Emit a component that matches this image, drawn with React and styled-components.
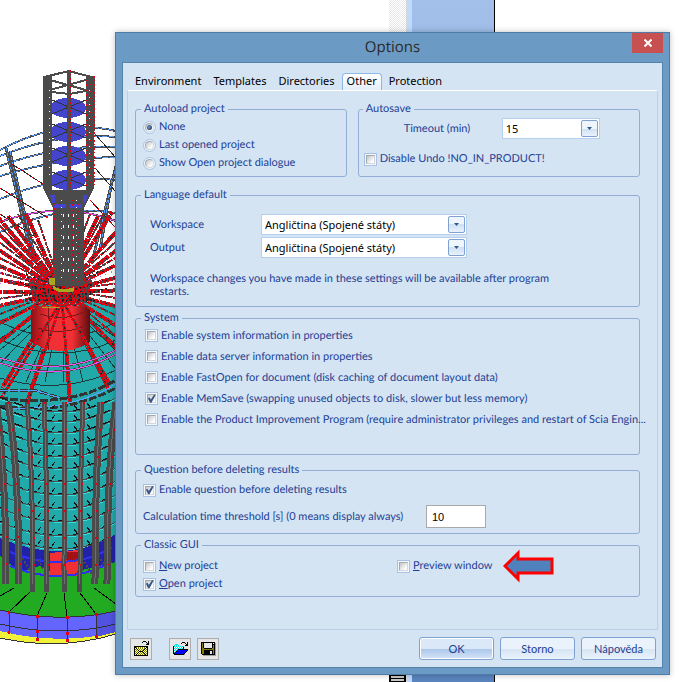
import React, { useState } from 'react';
import styled, { createGlobalStyle } from 'styled-components';

const GlobalStyle = createGlobalStyle`
    * {
        box-sizing: border-box;
    }
    body {
        margin: 0;
        background: #fff;
    }
    button, input, select {
        font: inherit;
        color: inherit;
        margin: 0;
    }
`

const Desktop = styled.div`
    position: relative;
    min-height: 100vh;
    padding: 32px 10px 7px 115px;
    overflow: hidden;
    font-family: Lato, 'Liberation Sans', Arial, sans-serif;
    font-size: 11px;
    line-height: 14px;
    text-rendering: geometricPrecision;
    color: #1c3f94;
`

const Backdrop = styled.div`
    position: absolute;
    inset: 0;
    .tower {
        display: block;
        position: absolute;
        top: 0;
        left: 0;
    }
`

const Strip = styled.div`
    position: absolute;
    top: 0;
    bottom: 0;
    left: 389px;
    width: 106px;
    display: flex;
    border-right: 1px solid #000;
    background: linear-gradient(#a2c0ea, #5a84bd);
    .track {
        width: 18px;
        border-right: 1px solid #d8d8d8;
        background: repeating-conic-gradient(#fff 0 25%, #e8e8e8 0 50%) 0 0 / 2px 2px;
        display: flex;
        align-items: flex-end;
    }
    .thumb {
        width: 17px;
        height: 10px;
        border: solid #000;
        border-width: 0 2px;
        background: repeating-linear-gradient(#000 0 1px, #c8c8c8 1px 3px);
    }
    .edge {
        width: 5px;
        background: #bfdaff;
    }
`

const Dialog = styled.section`
    position: relative;
    display: flex;
    flex-direction: column;
    border: 1px solid #4f7ca6;
    background: #6b9ac4;
    box-shadow: 0 0 6px rgba(0, 0, 0, 0.25);
`

const TitleBar = styled.header`
    height: 29px;
    display: grid;
    grid-template-columns: 1fr auto 1fr;
    h1 {
        margin: 0;
        font: 15px/29px 'Open Sans', sans-serif;
        color: #2b2b2b;
    }
`

const CloseButton = styled.button`
    justify-self: end;
    width: 31px;
    height: 20px;
    margin-right: 6px;
    padding: 0;
    border: 0;
    background: #c75050;
    display: flex;
    align-items: center;
    justify-content: center;
`

const Body = styled.div`
    margin: 0 6px 6px;
    padding: 10px 4px 7px;
    border: 1px solid #5382ab;
    background: #d5e4f3;
`

const Tabs = styled.nav`
    display: flex;
    padding-left: 3px;
`

const Tab = styled.button`
    height: 17px;
    padding: 0 4px 3px;
    margin-right: 2px;
    border: 1px solid ${props => props.$on ? '#8db8e8' : 'transparent'};
    border-bottom: 0;
    border-radius: 4px 4px 0 0;
    background: ${props => props.$on ? 'linear-gradient(#fff, #e3eefa)' : 'none'};
    font: 11px/13px 'Noto Sans', sans-serif;
    color: #000;
`

const Pane = styled.div`
    display: flex;
    flex-direction: column;
    padding: 11px 17px 32px 7px;
    border: 1px solid #b8d0ea;
    border-top-color: #fff;
`

const Columns = styled.div`
    display: grid;
    grid-template-columns: 3fr 4fr;
    gap: 11px;
`

const Group = styled.fieldset`
    min-width: 0;
    margin: 0 0 ${props => props.$gap || 0}px;
    padding: ${props => props.$pad};
    border: 1px solid #92aed6;
    border-radius: 3px;
`

const Legend = styled.legend`
    margin-left: -${props => props.$inset || 2}px;
    padding: 0 3px;
`

const Option = styled.label`
    position: relative;
    display: flex;
    align-items: center;
    gap: 3px;
    height: ${props => props.$tall ? 21 : 18}px;
    width: ${props => props.$fit ? 'fit-content' : 'auto'};
    span {
        white-space: nowrap;
    }
`

const Check = styled.input`
    appearance: none;
    flex: none;
    position: relative;
    width: 13px;
    height: 13px;
    border: 1px solid #a9c1e4;
    background: linear-gradient(135deg, #bfc3c8, #fff 80%) content-box, #f4f8fd;
    padding: 2px;
    &::before {
        content: '';
        position: absolute;
        inset: 1px;
        border: 1px solid #a5a9b0;
        border-right-color: #d3d6da;
        border-bottom-color: #d3d6da;
    }
    &:checked::after {
        content: '';
        position: absolute;
        inset: 1px;
        background: #35588a;
        clip-path: polygon(10% 45%, 30% 40%, 42% 62%, 78% 8%, 98% 8%, 50% 98%, 34% 98%);
    }
`

const Radio = styled(Check)`
    border-radius: 50%;
    background: #eef3f9;
    &::before {
        border-radius: 50%;
        background: linear-gradient(135deg, #c4c6ca, #fff 80%);
    }
    &:checked::after {
        inset: 3px;
        border-radius: 50%;
        clip-path: none;
        background: radial-gradient(circle at 40% 40%, #6f93bd, #2a4d7c 70%);
    }
`

const Field = styled.div`
    display: grid;
    grid-template-columns: ${props => props.$cols};
    align-items: center;
    margin: ${props => props.$top || 0}px 0 ${props => props.$gap || 0}px;
    padding-left: ${props => props.$indent || 0}px;
    label {
        white-space: nowrap;
    }
`

const SelectBox = styled.div`
    position: relative;
    width: ${props => props.$w}px;
    height: 21px;
    select {
        appearance: none;
        width: 100%;
        height: 100%;
        padding: 0 22px 0 3px;
        border: 1px solid #b5cfee;
        border-radius: 0;
        background: #fff;
        font: 11px/19px 'Noto Sans', sans-serif;
        color: #000;
    }
    i {
        position: absolute;
        top: 2px;
        right: 2px;
        width: 17px;
        height: 17px;
        border: 1px solid #7fa2d0;
        border-radius: 2px;
        background: linear-gradient(#eef5fd 50%, #cfe0f3 50%, #e8f2fd);
        pointer-events: none;
        display: flex;
        align-items: center;
        justify-content: center;
    }
`

const Note = styled.p`
    max-width: 410px;
    margin: 14px 0 0;
    line-height: 13px;
`

const NumberInput = styled.input`
    width: 60px;
    height: 23px;
    padding: 0 5px;
    border: 1px solid #a9a9a9;
    background: #fff;
    && {
        font: 11px/20px 'Liberation Sans', Arial, sans-serif;
        color: #000;
    }
`

const GuiGrid = styled.div`
    display: grid;
    grid-template-columns: 254px 1fr;
    .arrow {
        position: absolute;
        top: -8px;
        left: 100%;
        margin-left: 11px;
    }
`

const Footer = styled.footer`
    display: flex;
    align-items: center;
    gap: 6px;
    padding: 7px 2px 0 3px;
`

const IconButton = styled.button`
    width: 22px;
    height: 22px;
    margin-right: ${props => props.$gap || 0}px;
    padding: 0;
    border: 1px solid #adadad;
    background: #e6e6e6;
    display: flex;
    align-items: center;
    justify-content: center;
`

const PushButton = styled.button`
    width: 75px;
    height: 23px;
    padding: 0;
    border: 1px solid #7fa2d0;
    border-radius: 3px;
    background: ${props => props.$main
        ? 'linear-gradient(#dbe8f8 50%, #a9c5e8 50%, #d5e5f8)'
        : 'linear-gradient(#eaf2fc 50%, #d5e3f3 50%, #eaf3fd)'};
    box-shadow: ${props => props.$main ? 'inset 0 0 0 1px #fff' : 'none'};
    &.first {
        margin-left: auto;
    }
`

// one character per pixel
const palette = {
    k: '#000', w: '#fff', o: '#808000', y: '#ffff9c', c: '#00e5e5', b: '#0000ff', g: '#a0a0a0', l: '#e6e6e6',
};

const mailIcon = [
    '.........kkk..k',
    '........k...k.k',
    '.............kk',
    '............kkk',
    '...............',
    'kkkkkkkkkkkkkk.',
    'kkoyoyoyoyoykk.',
    'kykyoyoyoyokyk.',
    'koykyoyoyokyok.',
    'kyoykyoyokyoyk.',
    'koyoykkkkyoyok.',
    'kyoykyoyokyoyk.',
    'koykyoyoyokyok.',
    'kykyoyoyoyokyk.',
    'kkkkkkkkkkkkkk.',
];
const openIcon = [
    '.........kkk..k',
    '........k...k.k',
    '..ccc........kk',
    '.cwcwc......kkk',
    'kcwcwcwcwcc....',
    'kwcwcwcwcwk....',
    'kcwcwcwcwck....',
    'kwcwckkkkkkkkkk',
    'kcwckbbbbbbbbbk',
    'kwckbbbbbbbbbk.',
    'kckbbbbbbbbbk..',
    'kkbbbbbbbbbk...',
    '.kkkkkkkkkkg...',
];
const saveIcon = [
    'kkkkkkkkkkkkkk.',
    'kokllllllllkwkg',
    'kokllllllllkkkg',
    'kokllllllllkokg',
    'kokllllllllkokg',
    'kokllllllllkokg',
    'kookkkkkkkkookg',
    'kooooooooooookg',
    'kookkkkkkkkkokg',
    'kookkkkkkllkokg',
    'kookkkkkkllkokg',
    'kookkkkkkllkokg',
    '.kkkkkkkkkkkkkg',
    '..ggggggggggggg',
];

const PixelIcon = ({ rows }) => (
    <svg width="15" height={rows.length} shapeRendering="crispEdges" aria-hidden="true">
        {rows.map((row, y) => row.split('').map((ch, x) => ch !== '.' && (
            <rect key={`${x}-${y}`} x={x} y={y} width="1" height="1" fill={palette[ch]} />
        )))}
    </svg>
);

// grey member with red nodes scattered over it
const Cable = ({ d, w = 3, dash = '3 1 2 1' }) => (
    <g fill="none">
        <path d={d} stroke="#4b4b4b" strokeWidth={w} strokeDasharray="7 1 4 1" />
        <path d={d} stroke="#e6000f" strokeWidth={w} strokeDasharray={dash} />
        <path d={d} stroke="#222" strokeWidth="1" strokeDasharray="2 7" />
    </g>
);

const fan = [
    [-10, 208], [-10, 226], [-10, 244], [-10, 262], [-10, 278], [-10, 292], [-10, 308], [-10, 328], [-10, 350],
    [26, 214], [8, 216], [2, 388], [28, 400], [70, 402], [108, 388],
    [98, 216], [112, 212], [125, 222], [130, 240], [130, 258], [130, 274], [130, 290], [130, 310], [130, 334], [130, 362],
];
const thinFan = [
    [-10, 216], [-10, 235], [-10, 253], [-10, 270], [-10, 300], [-10, 318], [18, 214], [38, 220], [90, 214],
    [104, 214], [128, 231], [130, 249], [130, 282], [130, 300], [130, 322], [130, 348],
];
const columns = [[-4, 6], [8, 19], [27, 33], [44, 47], [65, 64], [83, 80], [101, 95], [116, 107]];
const rings = [412, 422, 433, 445, 457, 469, 482, 495, 509, 522, 536, 549];
const decks = [108, 132, 156, 180];
const bow = (y, k) => `M0 ${y - k} Q64 ${y + k} 116 ${y - k}`;

const hoops = [[150, 118], [156, 132], [166, 144], [176, 158], [199, 174], [232, 204]];
const struts = 'M6 148 L33 262 M10 152 L36 262 M116 166 L92 262 M112 180 L100 250';
const braces = 'M12 164 L46 186 M0 188 L48 218 M0 214 L40 240 M95 134 L116 158 M95 168 L116 192 M90 200 L116 228';

const Tower = () => (
    <svg className="tower" width="116" height="682" shapeRendering="crispEdges" aria-hidden="true">
        <defs>
            <linearGradient id="core">
                <stop offset="0" stopColor="#8c1014" />
                <stop offset="0.3" stopColor="#f03034" />
                <stop offset="0.7" stopColor="#f03034" />
                <stop offset="1" stopColor="#5c0c0e" />
            </linearGradient>
        </defs>
        <g fill="none" strokeWidth="1">
            {hoops.map(([a, b]) => (
                <g key={a}>
                    <path d={`M0 ${a} Q60 ${b} 116 ${a - 19}`} stroke="#4a4a4a" strokeWidth="2" />
                    <path d={`M0 ${a} Q60 ${b} 116 ${a - 19}`} stroke="#5aa0ff" strokeDasharray="5 2" />
                </g>
            ))}
            <path d="M0 222 Q60 200 116 221" stroke="#4a4a4a" strokeWidth="2" />
            <path d="M0 222 Q60 200 116 221" stroke="#f050f0" />
            <path d={struts} stroke="#4b4b4b" strokeWidth="3" />
            <path d={struts} stroke="#5aa0ff" strokeDasharray="3 2" />
            <path d={braces} stroke="#222" />
            <path d={braces} stroke="#e6000f" strokeDasharray="2 4" />
        </g>

        {/* cone and drum */}
        <path d="M0 306 L30 298 H90 L116 306 V556 H4 L0 540 Z" fill="#22a9a9" />
        <g stroke="#1b3b3b" strokeWidth="1" fill="none">
            {[-70, -40, -18, 4, 26, 45, 64, 83, 104, 126, 150, 180].map(x => <path key={x} d={`M62 300 L${x} 382`} />)}
            <path d="M0 322 Q62 352 116 322 M0 340 Q62 366 116 340 M0 378 Q62 396 116 370" />
        </g>

        {/* hub and stays */}
        <path d="M28 280 Q60 262 92 280 L88 302 Q60 310 34 302 Z" fill="#4b4b4b" />
        {thinFan.map(([x, y]) => <Cable key={`${x},${y}`} d={`M62 290 L${x} ${y}`} w={2} dash="1 3 2 2" />)}
        {fan.map(([x, y]) => <Cable key={`${x},${y}`} d={`M62 292 L${x} ${y}`} w={4} />)}
        <path d="M31 310 L38 306 H82 L90 310 V342 Q62 360 31 342 Z" fill="url(#core)" />
        <path d="M38 328 Q62 336 84 326 M48 306 V350 M40 314 Q62 322 84 312" fill="none" stroke="#7d1519" />
        {[[0, 400], [28, 402], [70, 402], [110, 384]].map(([x, y]) => (
            <Cable key={x} d={`M62 300 L${x} ${y}`} w={3} />
        ))}
        <g strokeWidth="1" fill="none">
            <path d="M0 284 Q60 270 116 284 M0 272 Q60 296 116 270 M10 296 Q60 312 110 296" stroke="#d070ff" strokeDasharray="1 5" />
            <path d="M14 290 Q60 304 108 288 M20 282 Q60 300 104 280 M30 300 H92 M26 274 L96 302 M98 272 L28 300" stroke="#222" strokeWidth="2" strokeDasharray="2 3 1 2" />
        </g>

        {/* mast */}
        <g fill="#4545cc">
            {decks.map(y => <ellipse key={y} cx="68" cy={y} rx="18" ry="10" />)}
            <path d="M48 192 H90 L85 207 H52 Z" />
        </g>
        <path d="M43 76 H52 V190 H86 V76 H95 L94 188 L84 208 V286 H53 V208 L43 188 Z" fill="#4b4b4b" />
        <path d="M50 195 H55 V203 H52 Z M83 195 H88 L85 203 H83 Z M54 204 H66 V208 H54 Z M70 204 H82 V208 H70 Z" fill="#4545cc" />
        <path d="M44 77 L69 71 L95 78 M50 80 L86 90 M86 80 L50 90 M52 92 L69 94 L86 91" fill="none" stroke="#4b4b4b" strokeWidth="2" />
        {decks.map(y => (
            <path key={y} d={`M52 ${y - 8} L86 ${y + 6} M86 ${y - 8} L52 ${y + 6}`} fill="none" stroke="#333" />
        ))}
        <path d="M69 70 V190" stroke="#4b4b4b" strokeWidth="4" />
        <g stroke="#e6000f" strokeWidth="1">
            <path d="M43.5 76 V188 M94.5 76 V188 M67.5 96 V194 M70.5 70 V190" strokeDasharray="2 2 1 3" />
            <path d="M51.5 80 V186 M86.5 80 V186 M54.5 204 V286 M83.5 204 V286 M65.5 196 V280 M72.5 200 V284" strokeDasharray="1 3 2 4" />
            <path d="M47.5 84 V186 M90.5 84 V186 M59.5 204 V284 M78.5 204 V284" strokeDasharray="1 6" />
            <path d="M49.5 90 V180 M89.5 90 V180 M61.5 200 V280 M76.5 200 V280" stroke="#fff" strokeDasharray="1 6" />
            <path d="M63.5 214 V276 M68.5 214 V276 M73.5 214 V276" stroke="#fff" strokeDasharray="3 8" />
        </g>
        <path d="M49 278 H54 V284 H50 Z M53 286 Q60 292 73 288 V291 Q60 294 53 288 Z M42 307 H60" fill="#a8a81e" stroke="#a8a81e" />

        {/* upper ring of the drum */}
        <g fill="none">
            <path d="M0 358 Q62 378 116 350 M0 363 Q62 384 116 354" stroke="#4b4b4b" strokeWidth="2" />
            <path d="M0 358 Q62 378 116 350 M0 363 Q62 384 116 354" stroke="#f050f0" />
            <path d="M0 390 H34 L60 398 M0 398 Q70 408 116 380 M0 406 Q62 416 116 388" stroke="#333" strokeWidth="3" strokeDasharray="8 2" />
            <path d="M0 390 H34 L60 398 M0 408 Q70 412 116 384" stroke="#5aa0ff" />
        </g>
        {rings.map(y => (
            <g key={y} fill="none">
                <path d={bow(y, 14)} stroke="#4b4b4b" />
                <path d={bow(y - 1, 14)} stroke="#111" strokeDasharray="9 6" />
                <path d={bow(y + 1, 14)} stroke="#35dede" strokeDasharray="8 6" />
                <path d={`M38 ${y - 5} l3 -4 M52 ${y - 3} l3 -4 M77 ${y - 3} l-3 -4 M90 ${y - 5} l-3 -4`} stroke="#111" />
            </g>
        ))}

        {/* ground level */}
        <path d="M0 538 Q64 566 116 534 V590 H0 Z" fill="#2222a8" />
        <path d="M0 556 L20 572 L40 566 L60 576 L90 568 L116 562 V600 H0 Z" fill="#22aa22" />
        <path d="M50 553 L78 550 V576 H50 Z" fill="#f03034" />
        <path d="M66 552 H78 V560 H66 Z" fill="#a31016" />
        <path d="M10 552 Q64 574 112 548 M10 566 Q64 588 112 562" fill="none" stroke="#3030f0" strokeWidth="2" />
        <path d="M22 558 l8 12 M38 560 l6 10 M84 562 l8 12 M98 556 l6 8" stroke="#4b4b4b" strokeWidth="2" strokeDasharray="2 2" />
        <path d="M0 590 Q30 574 64 580 Q100 574 116 586 V612 Q60 624 0 612 Z" fill="#22aa22" />
        <path d="M0 630 Q60 648 116 626 V634 Q60 652 0 638 Z" fill="#f2f23a" />
        <path d="M0 610 Q60 624 116 611 V632 Q60 646 0 631 Z" fill="#6464ff" />
        <path d="M96 614 L116 611 V632 L96 637 Z" fill="#5252e0" />
        <g fill="none" stroke="#333">
            <path d="M0 610 Q60 624 116 611 M0 624 Q60 638 116 624 M0 638 Q60 651 116 634" />
            <path d="M9 612 V633 M37 616 V638 M67 617 V640 M96 614 V637" />
            <path d="M0 596 L14 588 M9 612 L32 590 M37 616 L47 593 M67 617 L64 593 M96 614 L80 593 M116 604 L94 588" stroke="#000" />
        </g>
        <path d="M8 612 h2 M36 616 h3 M66 617 h3 M95 614 h3 M8 632 h2 M36 631 h3 M66 633 h3 M36 639 h3 M66 640 h3 M95 636 h3" stroke="#e6000f" strokeWidth="3" />

        {columns.map(([a, b], i) => (
            <g key={a} fill="none">
                <path d={`M${a} 402 Q${b} 470 ${b} ${i > 1 && i < 6 ? 592 : 584}`} stroke="#4b4b4b" strokeWidth={i < 2 || i > 5 ? 7 : 5} />
                <path d={`M${a} 402 Q${b} 470 ${b} 584`} stroke="#6e6e6e" />
                <path d={`M${a + 1} 402 Q${b + 1} 470 ${b + 1} 584`} stroke="#e6000f" strokeWidth="2" strokeDasharray="2 25" />
            </g>
        ))}
    </svg>
);

const DropArrow = () => (
    <i>
        <svg width="5" height="3" aria-hidden="true"><path d="M0 0 H5 L2.5 3 Z" fill="#35588a" /></svg>
    </i>
);

const Select = ({ id, w, value }) => (
    <SelectBox $w={w}>
        <select id={id} defaultValue={value}>
            <option>{value}</option>
        </select>
        <DropArrow />
    </SelectBox>
);

const tabs = ['Environment', 'Templates', 'Directories', 'Other', 'Protection'];
const autoload = ['None', 'Last opened project', 'Show Open project dialogue'];
const system = [
    { text: 'Enable system information in properties' },
    { text: 'Enable data server information in properties' },
    { text: 'Enable FastOpen for document (disk caching of document layout data)' },
    { text: 'Enable MemSave (swapping unused objects to disk, slower but less memory)', on: true },
    { text: 'Enable the Product Improvement Program (require administrator privileges and restart of Scia Engin...' },
];

const App = () => {
    const [tab, setTab] = useState('Other');

    return (
        <Desktop>
            <GlobalStyle />
            <Backdrop>
                <Tower />
                <Strip>
                    <div className='track'><div className='thumb' /></div>
                    <div className='edge' />
                </Strip>
            </Backdrop>
            <Dialog>
                <TitleBar>
                    <span />
                    <h1>Options</h1>
                    <CloseButton aria-label='Close'>
                        <svg width="8" height="8"><path d="M0.5 0.5 L7.5 7.5 M7.5 0.5 L0.5 7.5" stroke="#fff" strokeWidth="2" /></svg>
                    </CloseButton>
                </TitleBar>
                <Body>
                    <Tabs>
                        {tabs.map(name => (
                            <Tab key={name} $on={name === tab} onClick={() => setTab(name)}>{name}</Tab>
                        ))}
                    </Tabs>
                    <Pane>
                        <Columns>
                            <Group $gap={11} $pad='2px 7px 4px'>
                                <Legend>Autoload project</Legend>
                                {autoload.map((text, i) => (
                                    <Option key={text}>
                                        <Radio type='radio' name='autoload' defaultChecked={i === 0} />
                                        <span>{text}</span>
                                    </Option>
                                ))}
                            </Group>
                            <Group $gap={11} $pad='2px 7px 4px 5px'>
                                <Legend $inset={1}>Autosave</Legend>
                                <Field $cols='98px 1fr' $gap={11} $indent={40}>
                                    <label htmlFor='timeout'>Timeout (min)</label>
                                    <Select id='timeout' w={98} value='15' />
                                </Field>
                                <Option>
                                    <Check type='checkbox' />
                                    <span>Disable Undo !NO_IN_PRODUCT!</span>
                                </Option>
                            </Group>
                        </Columns>
                        <Group $gap={4} $pad='12px 7px 8px 14px'>
                            <Legend $inset={9}>Language default</Legend>
                            <Field $cols='111px 1fr' $gap={2}>
                                <label htmlFor='workspace'>Workspace</label>
                                <Select id='workspace' w={206} value='Angličtina (Spojené státy)' />
                            </Field>
                            <Field $cols='111px 1fr'>
                                <label htmlFor='output'>Output</label>
                                <Select id='output' w={206} value='Angličtina (Spojené státy)' />
                            </Field>
                            <Note>Workspace changes you have made in these settings will be available after program restarts.</Note>
                        </Group>
                        <Group $gap={8} $pad='0 0 24px 9px'>
                            <Legend $inset={4}>System</Legend>
                            {system.map(({ text, on }) => (
                                <Option key={text} $tall>
                                    <Check type='checkbox' defaultChecked={on} />
                                    <span>{text}</span>
                                </Option>
                            ))}
                        </Group>
                        <Group $gap={4} $pad='4px 7px 5px'>
                            <Legend>Question before deleting results</Legend>
                            <Option>
                                <Check type='checkbox' defaultChecked />
                                <span>Enable question before deleting results</span>
                            </Option>
                            <Field $cols='283px 1fr' $top={6}>
                                <label htmlFor='threshold'>Calculation time threshold [s] (0 means display always)</label>
                                <NumberInput id='threshold' defaultValue='10' />
                            </Field>
                        </Group>
                        <Group $pad='5px 7px 3px'>
                            <Legend>Classic GUI</Legend>
                            <GuiGrid>
                                <Option>
                                    <Check type='checkbox' />
                                    <span><u>N</u>ew project</span>
                                </Option>
                                <Option $fit>
                                    <Check type='checkbox' />
                                    <span><u>P</u>review window</span>
                                    <svg className='arrow' width="51" height="34" aria-hidden="true">
                                        <path d="M2 17 L15 4 V10 H49 V24 H15 V30 Z" fill="#4f81bd" stroke="#f00" strokeWidth="3" />
                                    </svg>
                                </Option>
                                <Option>
                                    <Check type='checkbox' defaultChecked />
                                    <span><u>O</u>pen project</span>
                                </Option>
                            </GuiGrid>
                        </Group>
                    </Pane>
                    <Footer>
                        <IconButton $gap={11} aria-label='Send'><PixelIcon rows={mailIcon} /></IconButton>
                        <IconButton aria-label='Load'><PixelIcon rows={openIcon} /></IconButton>
                        <IconButton aria-label='Save'><PixelIcon rows={saveIcon} /></IconButton>
                        <PushButton className='first' $main>OK</PushButton>
                        <PushButton>Storno</PushButton>
                        <PushButton>Nápověda</PushButton>
                    </Footer>
                </Body>
            </Dialog>
        </Desktop>
    );
};

export default App;
